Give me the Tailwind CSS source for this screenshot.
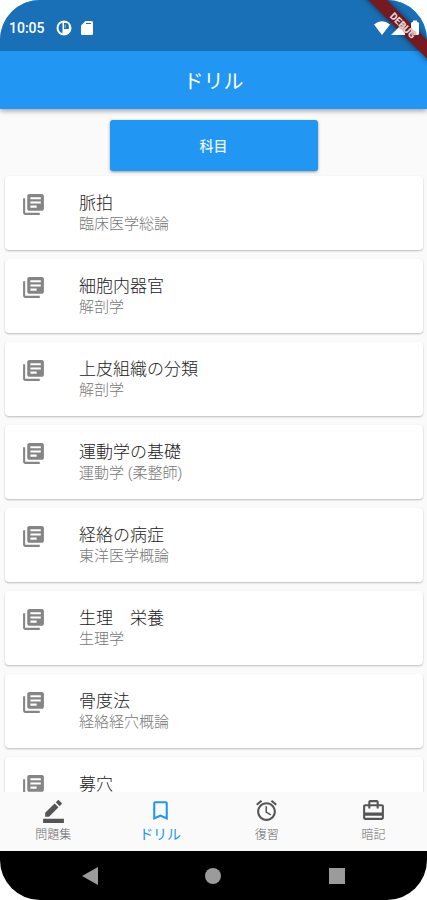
<!DOCTYPE html>
<html lang="ja">
<head>
<meta charset="utf-8">
<meta name="viewport" content="width=device-width, initial-scale=1">
<title>ドリル</title>
<script src="https://cdn.jsdelivr.net/npm/@tailwindcss/browser@4"></script>
</head>
<body class="bg-white font-[Roboto,'Noto_Sans_CJK_JP',sans-serif]">
<svg class="hidden" aria-hidden="true">
  <symbol id="books" viewBox="0 0 24 24"><path d="M4 6H2v14c0 1.1.9 2 2 2h14v-2H4V6zm16-4H8c-1.1 0-2 .9-2 2v12c0 1.1.9 2 2 2h12c1.1 0 2-.9 2-2V4c0-1.1-.9-2-2-2zm-1 9H9V9h10v2zm-4 4H9v-2h6v2zm4-8H9V5h10v2z"/></symbol>
</svg>
<div class="relative flex h-screen flex-col overflow-hidden rounded-[40px] bg-[#fafafa]">
  <header class="relative z-10 shrink-0 bg-[#2196f3] text-white shadow-[0_2px_5px_rgba(0,0,0,0.35)]">
    <div class="flex h-[51px] items-center bg-[#1a70b7] pt-1 pr-[7px] pl-[9px]">
      <span class="text-sm font-medium">10:05</span>
      <svg class="ml-[11px] size-4" viewBox="0 0 16 16"><circle cx="8" cy="8" r="7.5" fill="#fff"/><path d="M6.500 2.800A5.400 5.400 0 0 0 6.500 13.200z" fill="#1a70b7"/><path d="M8 3h1.500a3.300 3.300 0 0 1 3.300 3.300V9H8z" fill="#1a70b7"/><path d="M9.200 4.500V8" stroke="#fff" stroke-width=".6"/></svg>
      <svg class="ml-[9px] h-4 w-3" viewBox="0 0 12 16" fill="#fff"><path d="M4.500 1H10.500Q12 1 12 2.500V13.500Q12 15 10.500 15H1.500Q0 15 0 13.500V5.500z"/><path d="M5 3.500H10" stroke="#1a70b7" stroke-width="1"/></svg>
      <span class="flex-1"></span>
      <svg class="relative z-30 h-4 w-[46px]" viewBox="0 0 46 16" fill="#fff"><path d="M0 4.500Q8 -2 16 4.500L8 15zM17 15L31 1V15z"/><path d="M37 3.500Q37 2 38.500 2H39V0.500H43V2H43.500Q45 2 45 3.500V13.500Q45 15 43.500 15H38.500Q37 15 37 13.500z"/></svg>
    </div>
    <h1 class="flex h-[58px] items-center justify-center pt-1 text-xl font-normal">ドリル</h1>
    <div class="absolute -top-2 -right-9 z-20 flex h-[66px] w-[120px] items-center justify-center" aria-hidden="true">
      <span class="block h-[13px] w-[160px] shrink-0 rotate-45 bg-[#761920] shadow-[0_0_6px_rgba(0,0,0,0.55)]"></span>
    </div>
    <div class="absolute -top-2 -right-9 z-40 flex h-[66px] w-[120px] items-center justify-center">
      <span class="rotate-45 text-[10px] leading-[13px] font-black text-[#e3d3d0] text-shadow-[0_0_2px_#5a1015]">DEBUG</span>
    </div>
  </header>
  <main class="flex min-h-0 flex-1 flex-col">
    <div class="relative z-10 flex shrink-0 justify-center pt-[11px]">
      <button class="h-[51px] w-52 rounded-[3px] bg-[#2196f3] text-sm font-medium text-white/90 shadow-[0_1px_3px_rgba(0,0,0,0.4)]">科目</button>
    </div>
    <ul class="flex min-h-0 flex-1 flex-col gap-[9px] overflow-hidden pt-[5px] pr-1 pl-[5px]">
      <li class="flex h-[74px] shrink-0 gap-[33px] rounded bg-white px-4 pt-4 shadow-[0_1px_2px_rgba(0,0,0,0.25)]"><svg class="size-[25px] fill-[#858585]"><use href="#books"/></svg><div><h2 class="text-[17px] leading-[22px] font-light text-[#222]">脈拍</h2><p class="text-[15px] leading-[21px] font-light text-[#777]">臨床医学総論</p></div></li>
      <li class="flex h-[74px] shrink-0 gap-[33px] rounded bg-white px-4 pt-4 shadow-[0_1px_2px_rgba(0,0,0,0.25)]"><svg class="size-[25px] fill-[#858585]"><use href="#books"/></svg><div><h2 class="text-[17px] leading-[22px] font-light text-[#222]">細胞内器官</h2><p class="text-[15px] leading-[21px] font-light text-[#777]">解剖学</p></div></li>
      <li class="flex h-[74px] shrink-0 gap-[33px] rounded bg-white px-4 pt-4 shadow-[0_1px_2px_rgba(0,0,0,0.25)]"><svg class="size-[25px] fill-[#858585]"><use href="#books"/></svg><div><h2 class="text-[17px] leading-[22px] font-light text-[#222]">上皮組織の分類</h2><p class="text-[15px] leading-[21px] font-light text-[#777]">解剖学</p></div></li>
      <li class="flex h-[74px] shrink-0 gap-[33px] rounded bg-white px-4 pt-4 shadow-[0_1px_2px_rgba(0,0,0,0.25)]"><svg class="size-[25px] fill-[#858585]"><use href="#books"/></svg><div><h2 class="text-[17px] leading-[22px] font-light text-[#222]">運動学の基礎</h2><p class="text-[15px] leading-[21px] font-light text-[#777]">運動学 (柔整師)</p></div></li>
      <li class="flex h-[74px] shrink-0 gap-[33px] rounded bg-white px-4 pt-4 shadow-[0_1px_2px_rgba(0,0,0,0.25)]"><svg class="size-[25px] fill-[#858585]"><use href="#books"/></svg><div><h2 class="text-[17px] leading-[22px] font-light text-[#222]">経絡の病症</h2><p class="text-[15px] leading-[21px] font-light text-[#777]">東洋医学概論</p></div></li>
      <li class="flex h-[74px] shrink-0 gap-[33px] rounded bg-white px-4 pt-4 shadow-[0_1px_2px_rgba(0,0,0,0.25)]"><svg class="size-[25px] fill-[#858585]"><use href="#books"/></svg><div><h2 class="text-[17px] leading-[22px] font-light text-[#222]">生理　栄養</h2><p class="text-[15px] leading-[21px] font-light text-[#777]">生理学</p></div></li>
      <li class="flex h-[74px] shrink-0 gap-[33px] rounded bg-white px-4 pt-4 shadow-[0_1px_2px_rgba(0,0,0,0.25)]"><svg class="size-[25px] fill-[#858585]"><use href="#books"/></svg><div><h2 class="text-[17px] leading-[22px] font-light text-[#222]">骨度法</h2><p class="text-[15px] leading-[21px] font-light text-[#777]">経絡経穴概論</p></div></li>
      <li class="flex h-[74px] shrink-0 gap-[33px] rounded bg-white px-4 pt-4 shadow-[0_1px_2px_rgba(0,0,0,0.25)]"><svg class="size-[25px] fill-[#858585]"><use href="#books"/></svg><div><h2 class="text-[17px] leading-[22px] font-light text-[#222]">募穴</h2></div></li>
    </ul>
  </main>
  <nav class="grid h-[59px] shrink-0 grid-cols-4 bg-[#fafafa] text-xs font-light text-[#666]">
    <a href="#" class="flex flex-col items-center pt-[6px]"><svg class="size-[25px]" viewBox="0 0 24 24" fill="#555"><path d="M22 24H2v-4h20v4zM13.060 5.190l3.750 3.750L7.750 18H4v-3.750l9.060-9.060zm4.820 2.680l-3.750-3.750 1.830-1.830c.39-.39 1.020-.39 1.410 0l2.340 2.340c.39.39.39 1.020 0 1.410l-1.830 1.830z"/></svg><span class="leading-6">問題集</span></a>
    <a href="#" class="flex flex-col items-center pt-[6px] text-sm font-normal text-[#2196f3]" aria-current="page"><svg class="size-[25px]" viewBox="0 0 24 24" fill="currentColor"><path d="M17 3H7c-1.100 0-1.990.9-1.990 2L5 21l7-3 7 3V5c0-1.100-.9-2-2-2zm0 15l-5-2.180L7 18V5h10v13z"/></svg><span class="leading-[22px]">ドリル</span></a>
    <a href="#" class="flex flex-col items-center pt-[6px]"><svg class="size-[25px]" viewBox="0 0 24 24" fill="#555"><path d="M22 5.720l-4.600-3.860-1.290 1.530 4.600 3.860L22 5.720zM7.880 3.390L6.600 1.860 2 5.710l1.290 1.530 4.590-3.850zM12.500 8H11v6l4.750 2.850.75-1.230-4-2.370V8zM12 4c-4.970 0-9 4.030-9 9s4.020 9 9 9c4.970 0 9-4.030 9-9s-4.030-9-9-9zm0 16c-3.870 0-7-3.130-7-7s3.130-7 7-7 7 3.130 7 7-3.130 7-7 7z"/></svg><span class="leading-6">復習</span></a>
    <a href="#" class="flex flex-col items-center pt-[6px]"><svg class="size-[25px]" viewBox="0 0 24 24" fill="#555"><path d="M20 6h-3V4c0-1.110-.89-2-2-2H9c-1.110 0-2 .89-2 2v2H4c-1.110 0-2 .89-2 2v11c0 1.110.89 2 2 2h16c1.110 0 2-.89 2-2V8c0-1.110-.89-2-2-2zM9 4h6v2H9V4zm11 15H4v-2h16v2zm0-5H4V8h3v2h2V8h6v2h2V8h3v6z"/></svg><span class="leading-6">暗記</span></a>
  </nav>
  <div class="flex h-[49px] shrink-0 items-center justify-around bg-black px-7">
    <button aria-label="戻る"><svg class="h-[18px] w-4" viewBox="0 0 16 18" fill="#9b9b9b"><path d="M16 0V18L0 9z"/></svg></button>
    <button aria-label="ホーム" class="size-4 rounded-full bg-[#9b9b9b]"></button>
    <button aria-label="アプリ履歴" class="size-4 bg-[#9b9b9b]"></button>
  </div>
</div>
</body>
</html>
